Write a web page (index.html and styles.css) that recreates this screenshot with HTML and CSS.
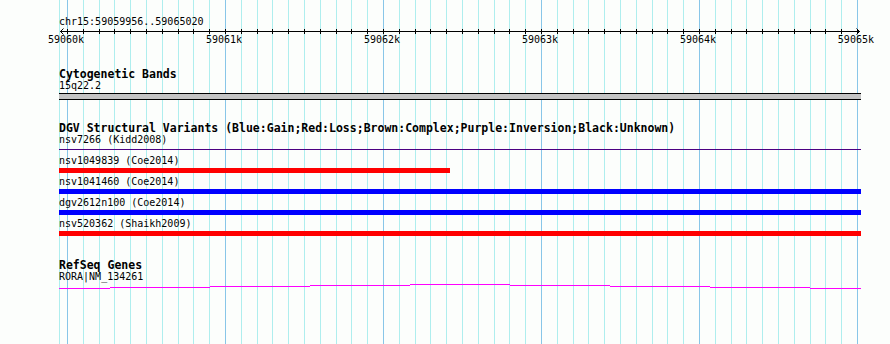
FILE: index.html
```html
<!DOCTYPE html>
<html>
<head>
<meta charset="utf-8">
<title>chr15:59059956..59065020</title>
<link rel="stylesheet" href="styles.css">
</head>
<body>
<div class="browser">
  <svg class="grid" width="890" height="344" viewBox="0 0 890 344" shape-rendering="crispEdges">
    <g class="minor">
      <rect x="59" y="0" width="1" height="344"/>
      <rect x="83" y="0" width="1" height="344"/><rect x="99" y="0" width="1" height="344"/><rect x="114" y="0" width="1" height="344"/><rect x="130" y="0" width="1" height="344"/><rect x="146" y="0" width="1" height="344"/><rect x="162" y="0" width="1" height="344"/><rect x="178" y="0" width="1" height="344"/><rect x="193" y="0" width="1" height="344"/><rect x="209" y="0" width="1" height="344"/>
      <rect x="241" y="0" width="1" height="344"/><rect x="257" y="0" width="1" height="344"/><rect x="272" y="0" width="1" height="344"/><rect x="288" y="0" width="1" height="344"/><rect x="304" y="0" width="1" height="344"/><rect x="320" y="0" width="1" height="344"/><rect x="336" y="0" width="1" height="344"/><rect x="351" y="0" width="1" height="344"/><rect x="367" y="0" width="1" height="344"/>
      <rect x="399" y="0" width="1" height="344"/><rect x="415" y="0" width="1" height="344"/><rect x="430" y="0" width="1" height="344"/><rect x="446" y="0" width="1" height="344"/><rect x="462" y="0" width="1" height="344"/><rect x="478" y="0" width="1" height="344"/><rect x="494" y="0" width="1" height="344"/><rect x="509" y="0" width="1" height="344"/><rect x="525" y="0" width="1" height="344"/>
      <rect x="557" y="0" width="1" height="344"/><rect x="573" y="0" width="1" height="344"/><rect x="588" y="0" width="1" height="344"/><rect x="604" y="0" width="1" height="344"/><rect x="620" y="0" width="1" height="344"/><rect x="636" y="0" width="1" height="344"/><rect x="652" y="0" width="1" height="344"/><rect x="667" y="0" width="1" height="344"/><rect x="683" y="0" width="1" height="344"/>
      <rect x="715" y="0" width="1" height="344"/><rect x="731" y="0" width="1" height="344"/><rect x="746" y="0" width="1" height="344"/><rect x="762" y="0" width="1" height="344"/><rect x="778" y="0" width="1" height="344"/><rect x="794" y="0" width="1" height="344"/><rect x="810" y="0" width="1" height="344"/><rect x="825" y="0" width="1" height="344"/><rect x="841" y="0" width="1" height="344"/>
    </g>
    <g class="major">
      <rect x="67" y="0" width="1" height="344"/><rect x="225" y="0" width="1" height="344"/><rect x="383" y="0" width="1" height="344"/><rect x="541" y="0" width="1" height="344"/><rect x="699" y="0" width="1" height="344"/><rect x="857" y="0" width="1" height="344"/>
    </g>
  </svg>

  <div class="tracks">
    <div class="ruler">
      <div class="text-line">chr15:59059956..59065020</div>
      <svg class="axis" width="802" height="6" viewBox="0 0 802 6" shape-rendering="crispEdges">
        <rect x="1" y="3" width="800" height="1"/>
        <g class="ticks">
          <rect x="8" y="1" width="1" height="5"/><rect x="24" y="1" width="1" height="5"/><rect x="40" y="1" width="1" height="5"/><rect x="55" y="1" width="1" height="5"/><rect x="71" y="1" width="1" height="5"/><rect x="87" y="1" width="1" height="5"/><rect x="103" y="1" width="1" height="5"/><rect x="119" y="1" width="1" height="5"/><rect x="134" y="1" width="1" height="5"/><rect x="150" y="1" width="1" height="5"/>
          <rect x="166" y="1" width="1" height="5"/><rect x="182" y="1" width="1" height="5"/><rect x="198" y="1" width="1" height="5"/><rect x="213" y="1" width="1" height="5"/><rect x="229" y="1" width="1" height="5"/><rect x="245" y="1" width="1" height="5"/><rect x="261" y="1" width="1" height="5"/><rect x="277" y="1" width="1" height="5"/><rect x="292" y="1" width="1" height="5"/><rect x="308" y="1" width="1" height="5"/>
          <rect x="324" y="1" width="1" height="5"/><rect x="340" y="1" width="1" height="5"/><rect x="356" y="1" width="1" height="5"/><rect x="371" y="1" width="1" height="5"/><rect x="387" y="1" width="1" height="5"/><rect x="403" y="1" width="1" height="5"/><rect x="419" y="1" width="1" height="5"/><rect x="435" y="1" width="1" height="5"/><rect x="450" y="1" width="1" height="5"/><rect x="466" y="1" width="1" height="5"/>
          <rect x="482" y="1" width="1" height="5"/><rect x="498" y="1" width="1" height="5"/><rect x="514" y="1" width="1" height="5"/><rect x="529" y="1" width="1" height="5"/><rect x="545" y="1" width="1" height="5"/><rect x="561" y="1" width="1" height="5"/><rect x="577" y="1" width="1" height="5"/><rect x="593" y="1" width="1" height="5"/><rect x="608" y="1" width="1" height="5"/><rect x="624" y="1" width="1" height="5"/>
          <rect x="640" y="1" width="1" height="5"/><rect x="656" y="1" width="1" height="5"/><rect x="672" y="1" width="1" height="5"/><rect x="687" y="1" width="1" height="5"/><rect x="703" y="1" width="1" height="5"/><rect x="719" y="1" width="1" height="5"/><rect x="735" y="1" width="1" height="5"/><rect x="751" y="1" width="1" height="5"/><rect x="766" y="1" width="1" height="5"/><rect x="782" y="1" width="1" height="5"/>
          <rect x="798" y="1" width="1" height="5"/>
        </g>
        <path class="arrow" d="M4.5 0.5 L1.5 3.5 L4.5 6.5 M797.5 0.5 L800.5 3.5 L797.5 6.5" shape-rendering="auto"/>
      </svg>
      <div class="tick-labels text-line">
        <span>59060k</span><span>59061k</span><span>59062k</span><span>59063k</span><span>59064k</span><span>59065k</span>
      </div>
    </div>

    <section class="track cyto">
      <h2 class="track-title">Cytogenetic Bands</h2>
      <div class="text-line">15q22.2</div>
      <div class="band"></div>
    </section>

    <section class="track dgv">
      <h2 class="track-title">DGV Structural Variants (Blue:Gain;Red:Loss;Brown:Complex;Purple:Inversion;Black:Unknown)</h2>
      <div class="text-line">nsv7266 (Kidd2008)</div>
      <div class="thin-feature"></div>
      <div class="feature">
        <div class="text-line">nsv1049839 (Coe2014)</div>
        <div class="bar loss" style="width:391px"></div>
      </div>
      <div class="feature">
        <div class="text-line">nsv1041460 (Coe2014)</div>
        <div class="bar gain" style="width:802px"></div>
      </div>
      <div class="feature">
        <div class="text-line">dgv2612n100 (Coe2014)</div>
        <div class="bar gain" style="width:802px"></div>
      </div>
      <div class="feature">
        <div class="text-line">nsv520362 (Shaikh2009)</div>
        <div class="bar loss" style="width:802px"></div>
      </div>
    </section>

    <section class="track genes">
      <h2 class="track-title">RefSeq Genes</h2>
      <div class="text-line">RORA|NM_134261</div>
      <svg class="gene" width="802" height="6" viewBox="0 0 802 6" shape-rendering="crispEdges">
        <rect x="0" y="5" width="51" height="1"/>
        <rect x="51" y="4" width="100" height="1"/>
        <rect x="151" y="3" width="100" height="1"/>
        <rect x="251" y="2" width="100" height="1"/>
        <rect x="351" y="1" width="100" height="1"/>
        <rect x="451" y="2" width="100" height="1"/>
        <rect x="551" y="3" width="100" height="1"/>
        <rect x="651" y="4" width="100" height="1"/>
        <rect x="751" y="5" width="51" height="1"/>
      </svg>
    </section>
  </div>
</div>
</body>
</html>
```

FILE: styles.css
```css
html, body {
  margin: 0;
  padding: 0;
  background: #fcfefc;
}

.browser {
  position: relative;
  width: 890px;
  height: 344px;
  overflow: hidden;
  font-family: "DejaVu Sans Mono", "Liberation Mono", monospace;
  font-size: 10px;
  color: #000;
}

.grid {
  position: absolute;
  left: 0;
  top: 0;
  z-index: 0;
}

.grid .minor rect {
  fill: #aeeeee;
}

.grid .major rect {
  fill: #88c6e8;
}

.tracks {
  position: relative;
  z-index: 1;
  width: 802px;
  margin-left: 59px;
  padding-top: 16px;
  display: flex;
  flex-direction: column;
}

.ruler {
  display: flex;
  flex-direction: column;
}

.text-line {
  height: 12px;
  line-height: 12px;
  white-space: nowrap;
}

.axis {
  display: block;
  overflow: visible;
}

.axis rect {
  fill: #000;
}

.axis .arrow {
  fill: none;
  stroke: #000;
  stroke-width: 1;
}

.tick-labels {
  display: flex;
  justify-content: space-between;
  width: 826px;
  margin-left: -11px;
}

.track {
  display: flex;
  flex-direction: column;
}

.track-title {
  margin: 0;
  height: 12px;
  line-height: 12px;
  font-size: 11.5px;
  font-weight: bold;
  white-space: nowrap;
}

.cyto {
  margin-top: 22px;
}

.band {
  margin-top: 1px;
  height: 5px;
  background: #c4c4c4;
  border-top: 1px solid #000;
  border-bottom: 1px solid #000;
}

.dgv {
  margin-top: 21.5px;
}

.thin-feature {
  margin-top: 3.5px;
  height: 1px;
  background: #4b0082;
}

.feature {
  display: flex;
  flex-direction: column;
  margin-top: 4.5px;
}

.feature + .feature {
  margin-top: 2.5px;
}

.bar {
  margin-top: 1.5px;
  height: 5px;
}

.bar.loss {
  background: #ff0000;
}

.bar.gain {
  background: #0000ff;
}

.genes {
  margin-top: 23px;
}

.gene {
  display: block;
}

.gene rect {
  fill: #ff00ff;
}
```
